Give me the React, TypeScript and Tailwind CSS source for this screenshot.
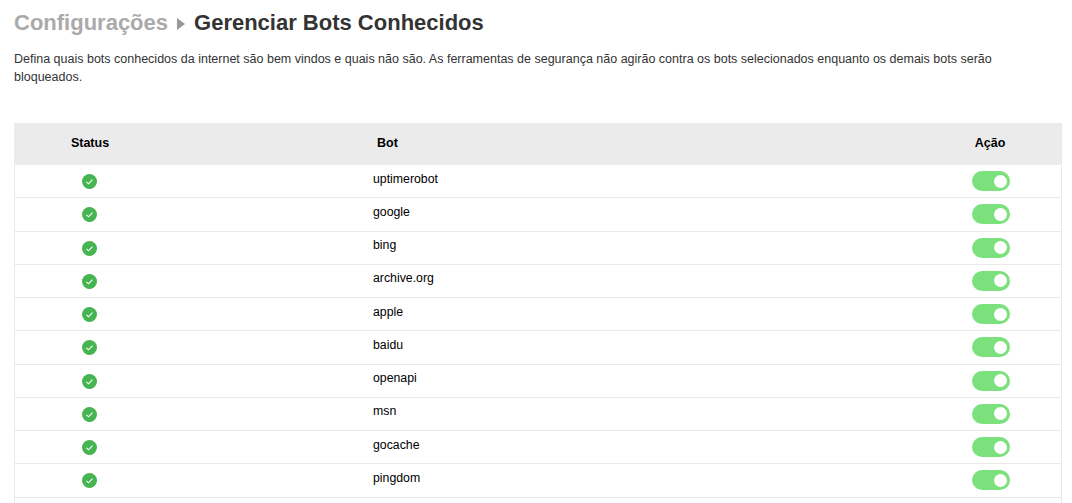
const bots = ["uptimerobot","google","bing","archive.org","apple","baidu","openapi","msn","gocache","pingdom",""];

function Check() {
  return (
    <svg width="15" height="15" viewBox="0 0 15 15" aria-hidden="true">
      <circle cx="7.5" cy="7.5" r="7.5" fill="#46b450" />
      <path d="M4.4 7.8l2.1 2 4-4.2" fill="none" stroke="#fff" strokeWidth="1.1" />
    </svg>
  );
}

function Toggle() {
  return (
    <div className="flex h-[20px] w-[38px] items-center justify-end rounded-full bg-[#7ae17d] pr-[3px]">
      <div className="h-[13px] w-[13px] rounded-full bg-white" />
    </div>
  );
}

export default function App() {
  return (
    <div className="h-screen overflow-hidden bg-white px-[14px] font-['Liberation_Sans',Arial,sans-serif] text-[#333]">
      <h1 className="flex h-[46px] items-center text-[22px] leading-none font-bold">
        <span className="text-[#aaa]">Configurações</span>
        <svg width="8" height="12" viewBox="0 0 8 12" className="mx-[9px] mt-[2px]" aria-hidden="true">
          <path d="M0 0l8 6L0 12z" fill="#999" />
        </svg>
        <span className="text-[#333]">Gerenciar Bots Conhecidos</span>
      </h1>
      <p className="mt-[4px] h-[73px] w-[1000px] text-[12.5px] leading-[18px]">
        Defina quais bots conhecidos da internet são bem vindos e quais não são. As ferramentas de segurança não agirão contra os bots selecionados enquanto os demais bots serão bloqueados.
      </p>
      <div className="w-[1048px] border-x border-[#e9e9e9]">
        <div className="-mx-px grid h-[42px] grid-cols-[152px_1fr_144px] items-center bg-[#ebebeb] pb-[2px] text-[12.5px] font-bold text-black">
          <div className="text-center">Status</div>
          <div className="pl-[211px]">Bot</div>
          <div className="text-center">Ação</div>
        </div>
        {bots.map((b, i) => (
          <div key={i} className="grid h-[33.25px] grid-cols-[149px_1fr_140px] items-center border-b border-[#e9e9e9] text-[12.3px] text-black">
            <div className="flex justify-center pt-[1px]"><Check /></div>
            <div className="pb-[5px] pl-[209px] leading-[14px]">{b}</div>
            <div className="flex justify-center"><Toggle /></div>
          </div>
        ))}
      </div>
    </div>
  );
}
